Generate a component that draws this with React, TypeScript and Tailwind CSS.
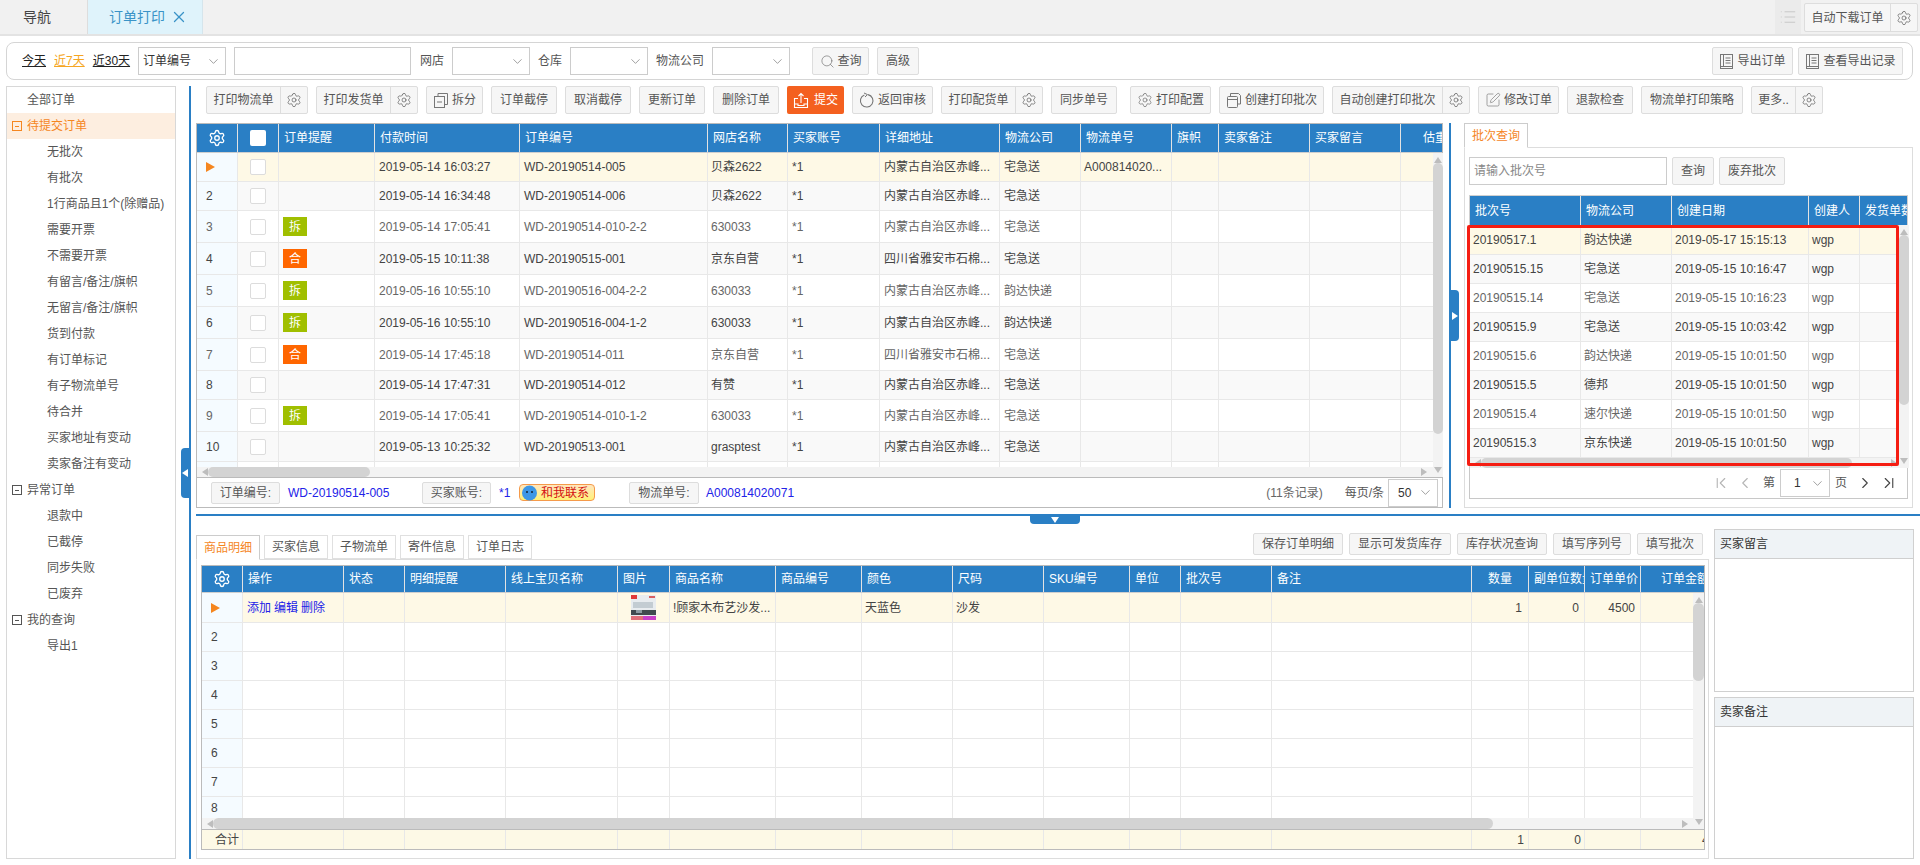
import {
  ChevronDown,
  ChevronFirst,
  ChevronLast,
  ChevronLeft,
  ChevronRight,
  List,
  Search,
  Settings,
  SquarePen,
  X,
} from "lucide-react";
import type { ReactNode } from "react";

const btnBase =
  "flex items-center justify-center shrink-0 border border-[#dddddd] bg-[#f6f6f6] rounded-[2px] text-[#555] whitespace-nowrap";

function SplitIcon() {
  return (
    <svg width="16" height="17" viewBox="0 0 16 17" fill="none" stroke="#777" strokeWidth="1">
      <path d="M5 4V1.5h9.5v11H12" />
      <rect x="1.5" y="4.5" width="10" height="11" />
      <path d="M4 10h5" />
    </svg>
  );
}

function CopyIcon() {
  return (
    <svg width="16" height="17" viewBox="0 0 16 17" fill="none" stroke="#777" strokeWidth="1">
      <path d="M4.5 4V1.5h8l2 2V12H12" />
      <rect x="1.5" y="4.5" width="10" height="11" rx="1" />
      <path d="M1.5 7.5h10" />
    </svg>
  );
}

function SubmitIcon() {
  return (
    <svg width="16" height="17" viewBox="0 0 16 17" fill="none" stroke="#fff" strokeWidth="1.1">
      <path d="M5 6.5H1.5v9h13v-9H11" />
      <path d="M8 11V1.5M5.5 4 8 1.5 10.5 4" />
      <path d="M1.5 12H5v1.5h6V12h3.5" />
    </svg>
  );
}

function ReturnIcon() {
  return (
    <svg width="16" height="17" viewBox="0 0 16 17" fill="none" stroke="#777" strokeWidth="1.1">
      <path d="M9 2.6a6.3 6.3 0 1 1-3.6.3" />
      <path d="M5 1 8.5 2.6 6 5" strokeWidth="1" />
    </svg>
  );
}

function DocIcon() {
  return (
    <svg width="15" height="17" viewBox="0 0 15 17" fill="none" stroke="#777" strokeWidth="1">
      <rect x="1.5" y="1.5" width="12" height="14" />
      <path d="M1.5 13.5h12M4.5 1.5v12M6.5 5h5M6.5 7.5h5M6.5 10h5" />
    </svg>
  );
}

function Arrow() {
  return (
    <svg width="9" height="10" viewBox="0 0 9 10">
      <polygon points="0,0 9,5 0,10" fill="#f5861f" />
    </svg>
  );
}

function Triangle({ dir, cls }: { dir: "l" | "r" | "u" | "d"; cls: string }) {
  const pts = { l: "6,0 0,4 6,8", r: "0,0 6,4 0,8", u: "0,6 4,0 8,6", d: "0,0 8,0 4,6" }[dir];
  const size = dir === "l" || dir === "r" ? { w: 6, h: 8 } : { w: 8, h: 6 };
  return (
    <svg width={size.w} height={size.h} viewBox={`0 0 ${size.w} ${size.h}`} className={cls}>
      <polygon points={pts} fill="currentColor" />
    </svg>
  );
}

function Thumb() {
  return (
    <svg width="25" height="25" viewBox="0 0 25 25">
      <rect width="25" height="25" fill="#e8ecef" />
      <rect x="0" y="0" width="6" height="4" fill="#e03a3a" />
      <rect x="18" y="1" width="6" height="2" fill="#d86060" />
      <rect x="2" y="7" width="20" height="6" fill="#c3ccd2" />
      <rect x="0" y="15" width="25" height="5" fill="#3f4a4f" />
      <rect x="5" y="15" width="6" height="3" fill="#8b9aa1" />
      <rect x="0" y="21" width="12" height="4" fill="#e0707a" />
      <rect x="12" y="21" width="13" height="4" fill="#c93fc9" />
    </svg>
  );
}

function Btn({ w, children, className = "" }: { w: string; children: ReactNode; className?: string }) {
  return <div className={`${btnBase} ${w} h-[28px] gap-[3px] ${className}`}>{children}</div>;
}

function SplitBtn({ w, label }: { w: string; label: string }) {
  return (
    <div className={`${btnBase} h-[28px]`}>
      <div className={`${w} h-full flex items-center justify-center`}>{label}</div>
      <div className="w-[27px] h-full flex items-center justify-center border-l border-[#dddddd]">
        <Settings size={16} strokeWidth={1} color="#555" />
      </div>
    </div>
  );
}

function Select({ w, value = "", className = "" }: { w: string; value?: string; className?: string }) {
  return (
    <div className={`${w} h-[28px] shrink-0 border border-[#cccccc] bg-white flex items-center justify-between pl-[4px] pr-[4px] text-[#333] ${className}`}>
      <span>{value}</span>
      <ChevronDown size={15} strokeWidth={1} color="#666" />
    </div>
  );
}

function TreeBox({ active }: { active?: boolean }) {
  return (
    <span className={`w-[10px] h-[10px] shrink-0 border flex items-center justify-center mr-[5px] ${active ? "border-[#f5861f]" : "border-[#555]"}`}>
      <span className={`w-[4px] h-px ${active ? "bg-[#f5861f]" : "bg-[#555]"}`} />
    </span>
  );
}

const sideItems: [string, number][] = [
  ["全部订单", 0],
  ["待提交订单", 1],
  ["无批次", 2],
  ["有批次", 2],
  ["1行商品且1个(除赠品)", 2],
  ["需要开票", 2],
  ["不需要开票", 2],
  ["有留言/备注/旗帜", 2],
  ["无留言/备注/旗帜", 2],
  ["货到付款", 2],
  ["有订单标记", 2],
  ["有子物流单号", 2],
  ["待合并", 2],
  ["买家地址有变动", 2],
  ["卖家备注有变动", 2],
  ["异常订单", 1],
  ["退款中", 2],
  ["已截停", 2],
  ["同步失败", 2],
  ["已废弃", 2],
  ["我的查询", 1],
  ["导出1", 2],
];

function Sidebar() {
  return (
    <div className="w-[170px] h-[773px] shrink-0 border border-[#d8d8d8] bg-white text-[#555]">
      {sideItems.map(([label, level], i) => {
        const active = i === 1;
        return (
          <div
            key={label}
            className={`h-[26px] flex items-center ${level === 0 ? "pl-[20px]" : level === 1 ? "pl-[5px]" : "pl-[40px]"} ${active ? "bg-[#fdeee0] text-[#f5861f]" : ""}`}
          >
            {level === 1 && <TreeBox active={active} />}
            {label}
          </div>
        );
      })}
    </div>
  );
}

function HScroll({ height, lead, thumb, rightPad }: { height: string; lead: string; thumb: string; rightPad: string }) {
  return (
    <div className={`${height} bg-[#f3f3f3] flex items-center ${lead} ${rightPad}`}>
      <Triangle dir="l" cls="text-[#bdbdbd] shrink-0" />
      <div className={`${thumb} h-full bg-[#d3d3d3] rounded-full shrink-0`} />
      <Triangle dir="r" cls="text-[#bdbdbd] shrink-0 ml-auto" />
    </div>
  );
}

function VScroll({ w, thumb }: { w: string; thumb: string }) {
  return (
    <div className={`${w} shrink-0 h-full bg-[#f3f3f3] flex flex-col items-center pt-[4px] pb-[4px]`}>
      <Triangle dir="u" cls="text-[#bdbdbd] shrink-0" />
      <div className={`w-full ${thumb} bg-[#d3d3d3] rounded-full shrink-0`} />
      <Triangle dir="d" cls="text-[#bdbdbd] shrink-0 mt-auto" />
    </div>
  );
}

function HeadCell({ w, children, className = "" }: { w: string; children?: ReactNode; className?: string }) {
  return (
    <div className={`${w} shrink-0 h-full flex items-center overflow-hidden whitespace-nowrap border-r border-[#e3e3e3] last:border-r-0 ${className}`}>
      {children}
    </div>
  );
}

function BodyCell({ w, children, className = "" }: { w: string; children?: ReactNode; className?: string }) {
  return (
    <div className={`${w} shrink-0 h-full flex items-center overflow-hidden whitespace-nowrap border-r border-[#e8e8e8] ${className}`}>
      {children}
    </div>
  );
}

function Check() {
  return <div className="w-[16px] h-[16px] border border-[#dcdcdc] bg-white rounded-[2px]" />;
}

function Tag({ type }: { type: string }) {
  return (
    <div className={`w-[24px] h-[19px] flex items-center justify-center text-white ml-[4px] ${type === "拆" ? "bg-[#a0bf00]" : "bg-[#ff6600]"}`}>
      {type}
    </div>
  );
}

const orderCols = [
  "w-[41px]", "w-[41px]", "w-[96px]", "w-[145px]", "w-[188px]", "w-[80px]", "w-[92px]",
  "w-[120px]", "w-[81px]", "w-[91px]", "w-[47px]", "w-[91px]", "w-[91px]", "w-[60px]",
];
const orderHead = ["", "", "订单提醒", "付款时间", "订单编号", "网店名称", "买家账号", "详细地址", "物流公司", "物流单号", "旗帜", "卖家备注", "买家留言", "估重"];

const NM = "内蒙古自治区赤峰...";
const SC = "四川省雅安市石棉...";
const orders = [
  { h: "h-[29px]", tag: "", time: "2019-05-14 16:03:27", no: "WD-20190514-005", shop: "贝森2622", addr: NM, ship: "宅急送", track: "A000814020..." },
  { h: "h-[29px]", tag: "", time: "2019-05-14 16:34:48", no: "WD-20190514-006", shop: "贝森2622", addr: NM, ship: "宅急送", track: "" },
  { h: "h-[32px]", tag: "拆", time: "2019-05-14 17:05:41", no: "WD-20190514-010-2-2", shop: "630033", addr: NM, ship: "宅急送", track: "" },
  { h: "h-[32px]", tag: "合", time: "2019-05-15 10:11:38", no: "WD-20190515-001", shop: "京东自营", addr: SC, ship: "宅急送", track: "" },
  { h: "h-[32px]", tag: "拆", time: "2019-05-16 10:55:10", no: "WD-20190516-004-2-2", shop: "630033", addr: NM, ship: "韵达快递", track: "" },
  { h: "h-[32px]", tag: "拆", time: "2019-05-16 10:55:10", no: "WD-20190516-004-1-2", shop: "630033", addr: NM, ship: "韵达快递", track: "" },
  { h: "h-[32px]", tag: "合", time: "2019-05-14 17:45:18", no: "WD-20190514-011", shop: "京东自营", addr: SC, ship: "宅急送", track: "" },
  { h: "h-[29px]", tag: "", time: "2019-05-14 17:47:31", no: "WD-20190514-012", shop: "有赞", addr: NM, ship: "宅急送", track: "" },
  { h: "h-[32px]", tag: "拆", time: "2019-05-14 17:05:41", no: "WD-20190514-010-1-2", shop: "630033", addr: NM, ship: "宅急送", track: "" },
  { h: "h-[30px]", tag: "", time: "2019-05-13 10:25:32", no: "WD-20190513-001", shop: "grasptest", addr: NM, ship: "宅急送", track: "" },
];

function rowStyle(i: number) {
  if (i === 0) return "bg-[#fef9e6] text-[#444]";
  return i % 2 === 1 ? "bg-[#f9f9f9] text-[#444]" : "bg-white text-[#666]";
}

function OrderGrid() {
  return (
    <div className="w-[1247px] h-[385px] shrink-0 border border-[#bbbbbb] flex flex-col bg-white">
      <div className="h-[29px] shrink-0 flex bg-[#2a7fc5] text-white border-b border-[#cfcfcf] overflow-hidden">
        <HeadCell w={orderCols[0]} className="justify-center">
          <Settings size={18} strokeWidth={1.8} color="#fff" />
        </HeadCell>
        <HeadCell w={orderCols[1]} className="justify-center">
          <div className="w-[16px] h-[16px] bg-white rounded-[2px]" />
        </HeadCell>
        {orderHead.slice(2).map((t, i) => (
          <HeadCell key={t} w={orderCols[i + 2]} className={t === "估重" ? "pl-[22px]" : "pl-[5px]"}>
            {t}
          </HeadCell>
        ))}
      </div>
      <div className="h-[324px] shrink-0 flex">
        <div className="w-[1236px] shrink-0 flex flex-col">
          <div className="h-[314px] shrink-0 overflow-hidden">
            {orders.map((o, i) => (
              <div key={o.no} className={`${o.h} flex border-b border-[#e8e8e8] ${rowStyle(i)}`}>
                <BodyCell w={orderCols[0]} className="bg-[#f5fbff] pl-[9px]">
                  {i === 0 ? <Arrow /> : i + 1}
                </BodyCell>
                <BodyCell w={orderCols[1]} className="justify-center">
                  <Check />
                </BodyCell>
                <BodyCell w={orderCols[2]}>{o.tag && <Tag type={o.tag} />}</BodyCell>
                <BodyCell w={orderCols[3]} className="pl-[4px]">{o.time}</BodyCell>
                <BodyCell w={orderCols[4]} className="pl-[4px]">{o.no}</BodyCell>
                <BodyCell w={orderCols[5]} className="pl-[3px]">{o.shop}</BodyCell>
                <BodyCell w={orderCols[6]} className="pl-[4px]">*1</BodyCell>
                <BodyCell w={orderCols[7]} className="pl-[4px]">{o.addr}</BodyCell>
                <BodyCell w={orderCols[8]} className="pl-[4px]">{o.ship}</BodyCell>
                <BodyCell w={orderCols[9]} className="pl-[3px]">{o.track}</BodyCell>
                <BodyCell w={orderCols[10]} />
                <BodyCell w={orderCols[11]} />
                <BodyCell w={orderCols[12]} />
                <BodyCell w="w-[32px]" className="border-r-0" />
              </div>
            ))}
            <div className="h-[6px] flex bg-white">
              {orderCols.slice(0, 13).map((c, i) => (
                <BodyCell key={i} w={c} className={i === 0 ? "bg-[#f5fbff]" : ""} />
              ))}
            </div>
          </div>
          <HScroll height="h-[10px]" lead="pl-[5px]" thumb="w-[162px]" rightPad="pr-[6px]" />
        </div>
        <VScroll w="w-[10px]" thumb="h-[271px]" />
      </div>
      <div className="flex-1 border-t border-[#bbbbbb] flex items-center pl-[14px] pr-[4px]">
        <div className="w-[69px] h-[22px] border border-[#dddddd] bg-[#f6f6f6] rounded-[2px] flex items-center justify-center text-[#555]">订单编号:</div>
        <span className="ml-[8px] w-[134px] text-[#2222e8]">WD-20190514-005</span>
        <div className="w-[69px] h-[22px] border border-[#dddddd] bg-[#f6f6f6] rounded-[2px] flex items-center justify-center text-[#555]">买家账号:</div>
        <span className="ml-[8px] w-[20px] text-[#2222e8]">*1</span>
        <div className="w-[76px] h-[17px] border border-[#f59a4a] rounded-[4px] bg-linear-to-b from-[#ffe6bd] to-[#fff176] flex items-center pl-[1px]">
          <svg width="17" height="17" viewBox="0 0 17 17" className="shrink-0">
            <circle cx="8.5" cy="9" r="7.5" fill="#3d97e6" />
            <circle cx="6" cy="8" r="1" fill="#123" />
            <circle cx="11" cy="8" r="1" fill="#123" />
          </svg>
          <span className="ml-[3px] text-[#d41010]">和我联系</span>
        </div>
        <div className="ml-[34px] w-[70px] h-[22px] border border-[#dddddd] bg-[#f6f6f6] rounded-[2px] flex items-center justify-center text-[#555]">物流单号:</div>
        <span className="ml-[7px] text-[#2222e8]">A000814020071</span>
        <span className="ml-auto text-[#666]">(11条记录)</span>
        <span className="ml-[22px] text-[#555]">每页/条</span>
        <Select w="w-[50px]" value="50" className="h-[22px] ml-[4px] pl-[9px]" />
      </div>
    </div>
  );
}

const batchCols = ["w-[111px]", "w-[91px]", "w-[137px]", "w-[51px]", "w-[50px]"];
const batches = [
  ["20190517.1", "韵达快递", "2019-05-17 15:15:13"],
  ["20190515.15", "宅急送", "2019-05-15 10:16:47"],
  ["20190515.14", "宅急送", "2019-05-15 10:16:23"],
  ["20190515.9", "宅急送", "2019-05-15 10:03:42"],
  ["20190515.6", "韵达快递", "2019-05-15 10:01:50"],
  ["20190515.5", "德邦", "2019-05-15 10:01:50"],
  ["20190515.4", "速尔快递", "2019-05-15 10:01:50"],
  ["20190515.3", "京东快递", "2019-05-15 10:01:50"],
];

function BatchPanel() {
  return (
    <div className="w-[449px] h-[385px] shrink-0 flex flex-col">
      <div className="h-[25px] shrink-0 flex">
        <div className="w-[64px] h-[25px] border border-[#cccccc] border-b-white bg-white flex items-center justify-center text-[#f5861f] z-10">
          批次查询
        </div>
      </div>
      <div className="-mt-px flex-1 border border-[#dddddd] px-[4px] pt-[9px]">
        <div className="flex items-center h-[28px]">
          <div className="w-[198px] h-[28px] border border-[#cccccc] flex items-center pl-[4px] text-[#888]">请输入批次号</div>
          <Btn w="w-[42px]" className="ml-[5px]">查询</Btn>
          <Btn w="w-[66px]" className="ml-[5px]">废弃批次</Btn>
        </div>
        <div className="relative mt-[10px] h-[272px] flex flex-col border-t border-x border-[#d0d0d0]">
          <div className="h-[29px] shrink-0 flex bg-[#2a7fc5] text-white overflow-hidden">
            {["批次号", "物流公司", "创建日期", "创建人", "发货单数"].map((t, i) => (
              <HeadCell key={t} w={batchCols[i]} className="pl-[5px]">{t}</HeadCell>
            ))}
          </div>
          <div className="flex h-[243px]">
            <div className="w-[429px] shrink-0 flex flex-col">
              <div className="h-[233px] shrink-0 overflow-hidden">
                {batches.map((b, i) => (
                  <div key={b[0]} className={`${i === 0 ? "h-[30px]" : "h-[29px]"} flex border-b border-[#e8e8e8] ${rowStyle(i)}`}>
                    <BodyCell w={batchCols[0]} className="pl-[3px]">{b[0]}</BodyCell>
                    <BodyCell w={batchCols[1]} className="pl-[3px]">{b[1]}</BodyCell>
                    <BodyCell w={batchCols[2]} className="pl-[3px]">{b[2]}</BodyCell>
                    <BodyCell w={batchCols[3]} className="pl-[3px]">wgp</BodyCell>
                    <BodyCell w="w-[39px]" className="border-r-0" />
                  </div>
                ))}
              </div>
              <HScroll height="h-[10px]" lead="pl-[5px]" thumb="w-[371px]" rightPad="pr-[2px]" />
            </div>
            <VScroll w="w-[10px]" thumb="h-[170px]" />
          </div>
          <div className="absolute left-[-3px] top-[29px] w-[432px] h-[241px] border-[3px] border-[#f51d12] rounded-[2px] pointer-events-none" />
        </div>
        <div className="h-[32px] border border-[#c8c8c8] flex items-center justify-end pr-[9px] text-[#555]">
          <ChevronFirst size={18} strokeWidth={1.5} color="#b5b5b5" />
          <ChevronLeft size={18} strokeWidth={1.5} color="#b5b5b5" className="ml-[6px]" />
          <span className="ml-[9px]">第</span>
          <Select w="w-[50px]" value="1" className="h-[22px] ml-[5px] pl-[13px]" />
          <span className="ml-[5px]">页</span>
          <ChevronRight size={18} strokeWidth={1.5} color="#444" className="ml-[9px]" />
          <ChevronLast size={18} strokeWidth={1.5} color="#444" className="ml-[6px]" />
        </div>
      </div>
    </div>
  );
}

const itemCols = [
  "w-[41px]", "w-[101px]", "w-[61px]", "w-[101px]", "w-[112px]", "w-[52px]", "w-[106px]", "w-[86px]", "w-[91px]",
  "w-[91px]", "w-[86px]", "w-[51px]", "w-[91px]", "w-[200px]", "w-[57px]", "w-[56px]", "w-[56px]", "w-[63px]",
];
const itemHead = ["操作", "状态", "明细提醒", "线上宝贝名称", "图片", "商品名称", "商品编号", "颜色", "尺码", "SKU编号", "单位", "批次号", "备注", "数量", "副单位数量", "订单单价", "订单金额"];

function ItemRowCells({ index }: { index?: number }) {
  return (
    <>
      <BodyCell w={itemCols[0]} className="bg-[#f5fbff] pl-[9px] text-[#444]">{index}</BodyCell>
      {itemCols.slice(1, 17).map((c, i) => (
        <BodyCell key={i} w={c} />
      ))}
    </>
  );
}

function ItemGrid() {
  return (
    <div className="w-[1504px] h-[285px] border border-[#bbbbbb] border-t-[#bbbbbb] flex flex-col bg-white">
      <div className="h-[27px] shrink-0 flex bg-[#2a7fc5] text-white border-b border-[#cfcfcf] overflow-hidden">
        <HeadCell w={itemCols[0]} className="justify-center">
          <Settings size={18} strokeWidth={1.8} color="#fff" />
        </HeadCell>
        {itemHead.map((t, i) => (
          <HeadCell
            key={t}
            w={itemCols[i + 1]}
            className={t === "数量" ? "pl-[16px]" : t === "订单金额" ? "pl-[20px]" : "pl-[5px]"}
          >
            {t}
          </HeadCell>
        ))}
      </div>
      <div className="h-[236px] shrink-0 flex">
        <div className="w-[1491px] shrink-0 flex flex-col">
          <div className="h-[225px] shrink-0 overflow-hidden">
            <div className="h-[30px] flex border-b border-[#e8e8e8] bg-[#fef9e6] text-[#444]">
              <BodyCell w={itemCols[0]} className="bg-[#f5fbff] pl-[9px]"><Arrow /></BodyCell>
              <BodyCell w={itemCols[1]} className="pl-[4px] text-[#2222e8] gap-[3px]">
                <span>添加</span><span>编辑</span><span>删除</span>
              </BodyCell>
              <BodyCell w={itemCols[2]} />
              <BodyCell w={itemCols[3]} />
              <BodyCell w={itemCols[4]} />
              <BodyCell w={itemCols[5]} className="justify-center"><Thumb /></BodyCell>
              <BodyCell w={itemCols[6]} className="pl-[3px]">!顾家木布艺沙发...</BodyCell>
              <BodyCell w={itemCols[7]} />
              <BodyCell w={itemCols[8]} className="pl-[3px]">天蓝色</BodyCell>
              <BodyCell w={itemCols[9]} className="pl-[3px]">沙发</BodyCell>
              <BodyCell w={itemCols[10]} />
              <BodyCell w={itemCols[11]} />
              <BodyCell w={itemCols[12]} />
              <BodyCell w={itemCols[13]} />
              <BodyCell w={itemCols[14]} className="justify-end pr-[6px]">1</BodyCell>
              <BodyCell w={itemCols[15]} className="justify-end pr-[5px]">0</BodyCell>
              <BodyCell w={itemCols[16]} className="justify-end pr-[5px]">4500</BodyCell>
              <BodyCell w="w-[52px]" className="border-r-0" />
            </div>
            {[2, 3, 4, 5, 6, 7].map((n) => (
              <div key={n} className="h-[29px] flex border-b border-[#e8e8e8]">
                <ItemRowCells index={n} />
              </div>
            ))}
            <div className="h-[21px] flex">
              <ItemRowCells index={8} />
            </div>
          </div>
          <HScroll height="h-[11px]" lead="pl-[5px]" thumb="w-[1280px]" rightPad="pr-[5px]" />
        </div>
        <VScroll w="w-[11px]" thumb="h-[78px]" />
      </div>
      <div className="flex-1 flex border-t border-[#bbbbbb] bg-[#fdf9e6] text-[#444] overflow-hidden">
        <BodyCell w={itemCols[0]} className="pl-[13px]">合计</BodyCell>
        {itemCols.slice(1, 14).map((c, i) => (
          <BodyCell key={i} w={c} />
        ))}
        <BodyCell w={itemCols[14]} className="justify-end pr-[4px]">1</BodyCell>
        <BodyCell w={itemCols[15]} className="justify-end pr-[3px]">0</BodyCell>
        <BodyCell w={itemCols[16]} />
        <BodyCell w="w-[63px]" className="border-r-0 pl-[61px]">4500</BodyCell>
      </div>
    </div>
  );
}

function NotePanel({ title, h }: { title: string; h: string }) {
  return (
    <div className={`${h} border border-[#d0d0d0] flex flex-col`}>
      <div className="h-[29px] shrink-0 bg-[#eff3f6] border-b border-[#cfcfcf] flex items-center pl-[5px] text-[#333]">{title}</div>
    </div>
  );
}

export default function App() {
  return (
    <div className="w-[1920px] h-[865px] overflow-hidden bg-white text-[12px] leading-none font-['Liberation_Sans','Noto_Sans_CJK_SC',sans-serif] flex flex-col">
      {/* top tabs */}
      <div className="h-[36px] shrink-0 bg-[#f1f1f1] border-b-2 border-[#e3e3e3] flex">
        <div className="w-[88px] flex items-center pl-[23px] text-[14px] text-[#444] border-r border-[#dddddd]">导航</div>
        <div className="w-[115px] flex items-center pl-[21px] bg-[#dff3fb] text-[14px] text-[#3a93c7] border-r border-[#d5e5ec]">
          订单打印
          <X size={18} strokeWidth={1.7} color="#3a93c7" className="ml-[5px]" />
        </div>
        <div className="ml-auto w-[26px] h-full bg-[#ebebeb] flex items-center justify-center">
          <List size={18} strokeWidth={1.2} color="#c4c4c4" />
        </div>
        <div className="ml-[3px] mr-[2px] mt-[3px] h-[29px] flex border border-[#dddddd] bg-[#f6f6f6] text-[#555] rounded-[2px]">
          <div className="w-[85px] flex items-center justify-center">自动下载订单</div>
          <div className="w-[27px] flex items-center justify-center border-l border-[#dddddd]">
            <Settings size={16} strokeWidth={1} color="#555" />
          </div>
        </div>
      </div>

      {/* search */}
      <div className="mt-[6px] ml-[6px] w-[1907px] h-[38px] shrink-0 border border-[#d5d5d5] rounded-[8px] flex items-center text-[#555]">
        <span className="ml-[15px] underline text-[#222]">今天</span>
        <span className="ml-[8px] underline text-[#f5a623]">近7天</span>
        <span className="ml-[8px] underline text-[#222]">近30天</span>
        <Select w="w-[88px]" value="订单编号" className="ml-[8px]" />
        <div className="ml-[8px] w-[177px] h-[28px] border border-[#cccccc]" />
        <span className="ml-[9px]">网店</span>
        <Select w="w-[78px]" className="ml-[8px]" />
        <span className="ml-[8px]">仓库</span>
        <Select w="w-[78px]" className="ml-[8px]" />
        <span className="ml-[8px]">物流公司</span>
        <Select w="w-[78px]" className="ml-[8px]" />
        <Btn w="w-[57px]" className="ml-[22px]">
          <Search size={15} strokeWidth={1} color="#666" />
          查询
        </Btn>
        <Btn w="w-[42px]" className="ml-[8px]">高级</Btn>
        <Btn w="w-[81px]" className="ml-auto"><DocIcon />导出订单</Btn>
        <Btn w="w-[105px]" className="ml-[5px] mr-[9px]"><DocIcon />查看导出记录</Btn>
      </div>

      {/* body */}
      <div className="mt-[6px] flex-1 flex pl-[6px] min-h-0">
        <Sidebar />
        <div className="relative ml-[13px] w-[2px] h-[773px] shrink-0 bg-[#2a7fc5]">
          <div className="absolute left-[-8px] top-[362px] w-[8px] h-[50px] bg-[#2a7fc5] rounded-l-[4px] flex items-center justify-center">
            <Triangle dir="l" cls="text-white" />
          </div>
        </div>
        <div className="ml-[5px] w-[1724px] shrink-0 flex flex-col">
          {/* toolbar */}
          <div className="h-[28px] shrink-0 flex pl-[10px]">
            <SplitBtn w="w-[73px]" label="打印物流单" />
            <div className="w-[8px]" />
            <SplitBtn w="w-[73px]" label="打印发货单" />
            <Btn w="w-[57px]" className="ml-[8px]"><SplitIcon />拆分</Btn>
            <Btn w="w-[66px]" className="ml-[8px]">订单截停</Btn>
            <Btn w="w-[66px]" className="ml-[8px]">取消截停</Btn>
            <Btn w="w-[66px]" className="ml-[8px]">更新订单</Btn>
            <Btn w="w-[66px]" className="ml-[8px]">删除订单</Btn>
            <div className="ml-[8px] w-[57px] h-[28px] bg-[#f4601f] rounded-[2px] flex items-center justify-center gap-[5px] text-white">
              <SubmitIcon />提交
            </div>
            <Btn w="w-[81px]" className="ml-[8px]"><ReturnIcon />返回审核</Btn>
            <div className="w-[8px]" />
            <SplitBtn w="w-[73px]" label="打印配货单" />
            <Btn w="w-[66px]" className="ml-[8px]">同步单号</Btn>
            <Btn w="w-[81px]" className="ml-[13px]">
              <Settings size={16} strokeWidth={1} color="#666" />打印配置
            </Btn>
            <Btn w="w-[105px]" className="ml-[8px]"><CopyIcon />创建打印批次</Btn>
            <div className="w-[8px]" />
            <SplitBtn w="w-[109px]" label="自动创建打印批次" />
            <Btn w="w-[81px]" className="ml-[8px]">
              <SquarePen size={16} strokeWidth={1} color="#777" />修改订单
            </Btn>
            <Btn w="w-[66px]" className="ml-[8px]">退款检查</Btn>
            <Btn w="w-[102px]" className="ml-[8px]">物流单打印策略</Btn>
            <div className="w-[8px]" />
            <SplitBtn w="w-[43px]" label="更多.." />
          </div>

          {/* upper grids */}
          <div className="mt-[9px] h-[385px] shrink-0 flex">
            <OrderGrid />
            <div className="relative ml-[6px] w-[2px] h-[385px] shrink-0 bg-[#2a7fc5]">
              <div className="absolute left-[2px] top-[167px] w-[8px] h-[51px] bg-[#2a7fc5] rounded-r-[4px] flex items-center justify-center">
                <Triangle dir="r" cls="text-white" />
              </div>
            </div>
            <div className="w-[13px] shrink-0" />
            <BatchPanel />
          </div>

          {/* divider */}
          <div className="relative mt-[6px] h-[2px] shrink-0 bg-[#2a7fc5]">
            <div className="absolute left-[834px] top-[2px] w-[50px] h-[8px] bg-[#2a7fc5] rounded-b-[4px] flex items-center justify-center">
              <Triangle dir="d" cls="text-white" />
            </div>
          </div>

          {/* lower section */}
          <div className="h-[343px] shrink-0 flex">
            <div className="w-[1513px] shrink-0 flex flex-col">
              <div className="h-[43px] shrink-0 flex items-end justify-between pr-[6px]">
                <div className="flex gap-[4px]">
                  {["商品明细", "买家信息", "子物流单", "寄件信息", "订单日志"].map((t, i) => (
                    <div
                      key={t}
                      className={`w-[64px] h-[24px] border flex items-center justify-center ${i === 0 ? "border-[#cccccc] border-b-white text-[#f5861f] z-10 -mb-px h-[25px]" : "border-[#e0e0e0] text-[#555]"}`}
                    >
                      {t}
                    </div>
                  ))}
                </div>
                <div className="flex gap-[6px] mb-[4px]">
                  {[
                    ["w-[90px]", "保存订单明细"],
                    ["w-[102px]", "显示可发货库存"],
                    ["w-[90px]", "库存状况查询"],
                    ["w-[78px]", "填写序列号"],
                    ["w-[66px]", "填写批次"],
                  ].map(([w, t]) => (
                    <Btn key={t} w={w} className="h-[22px]!">{t}</Btn>
                  ))}
                </div>
              </div>
              <div className="h-[300px] border border-[#dddddd] pl-[4px] pt-[5px]">
                <ItemGrid />
              </div>
            </div>
            <div className="ml-[5px] mt-[13px] w-[200px] shrink-0 flex flex-col gap-[5px]">
              <NotePanel title="买家留言" h="h-[163px]" />
              <NotePanel title="卖家备注" h="h-[162px]" />
            </div>
          </div>
        </div>
      </div>
    </div>
  );
}
